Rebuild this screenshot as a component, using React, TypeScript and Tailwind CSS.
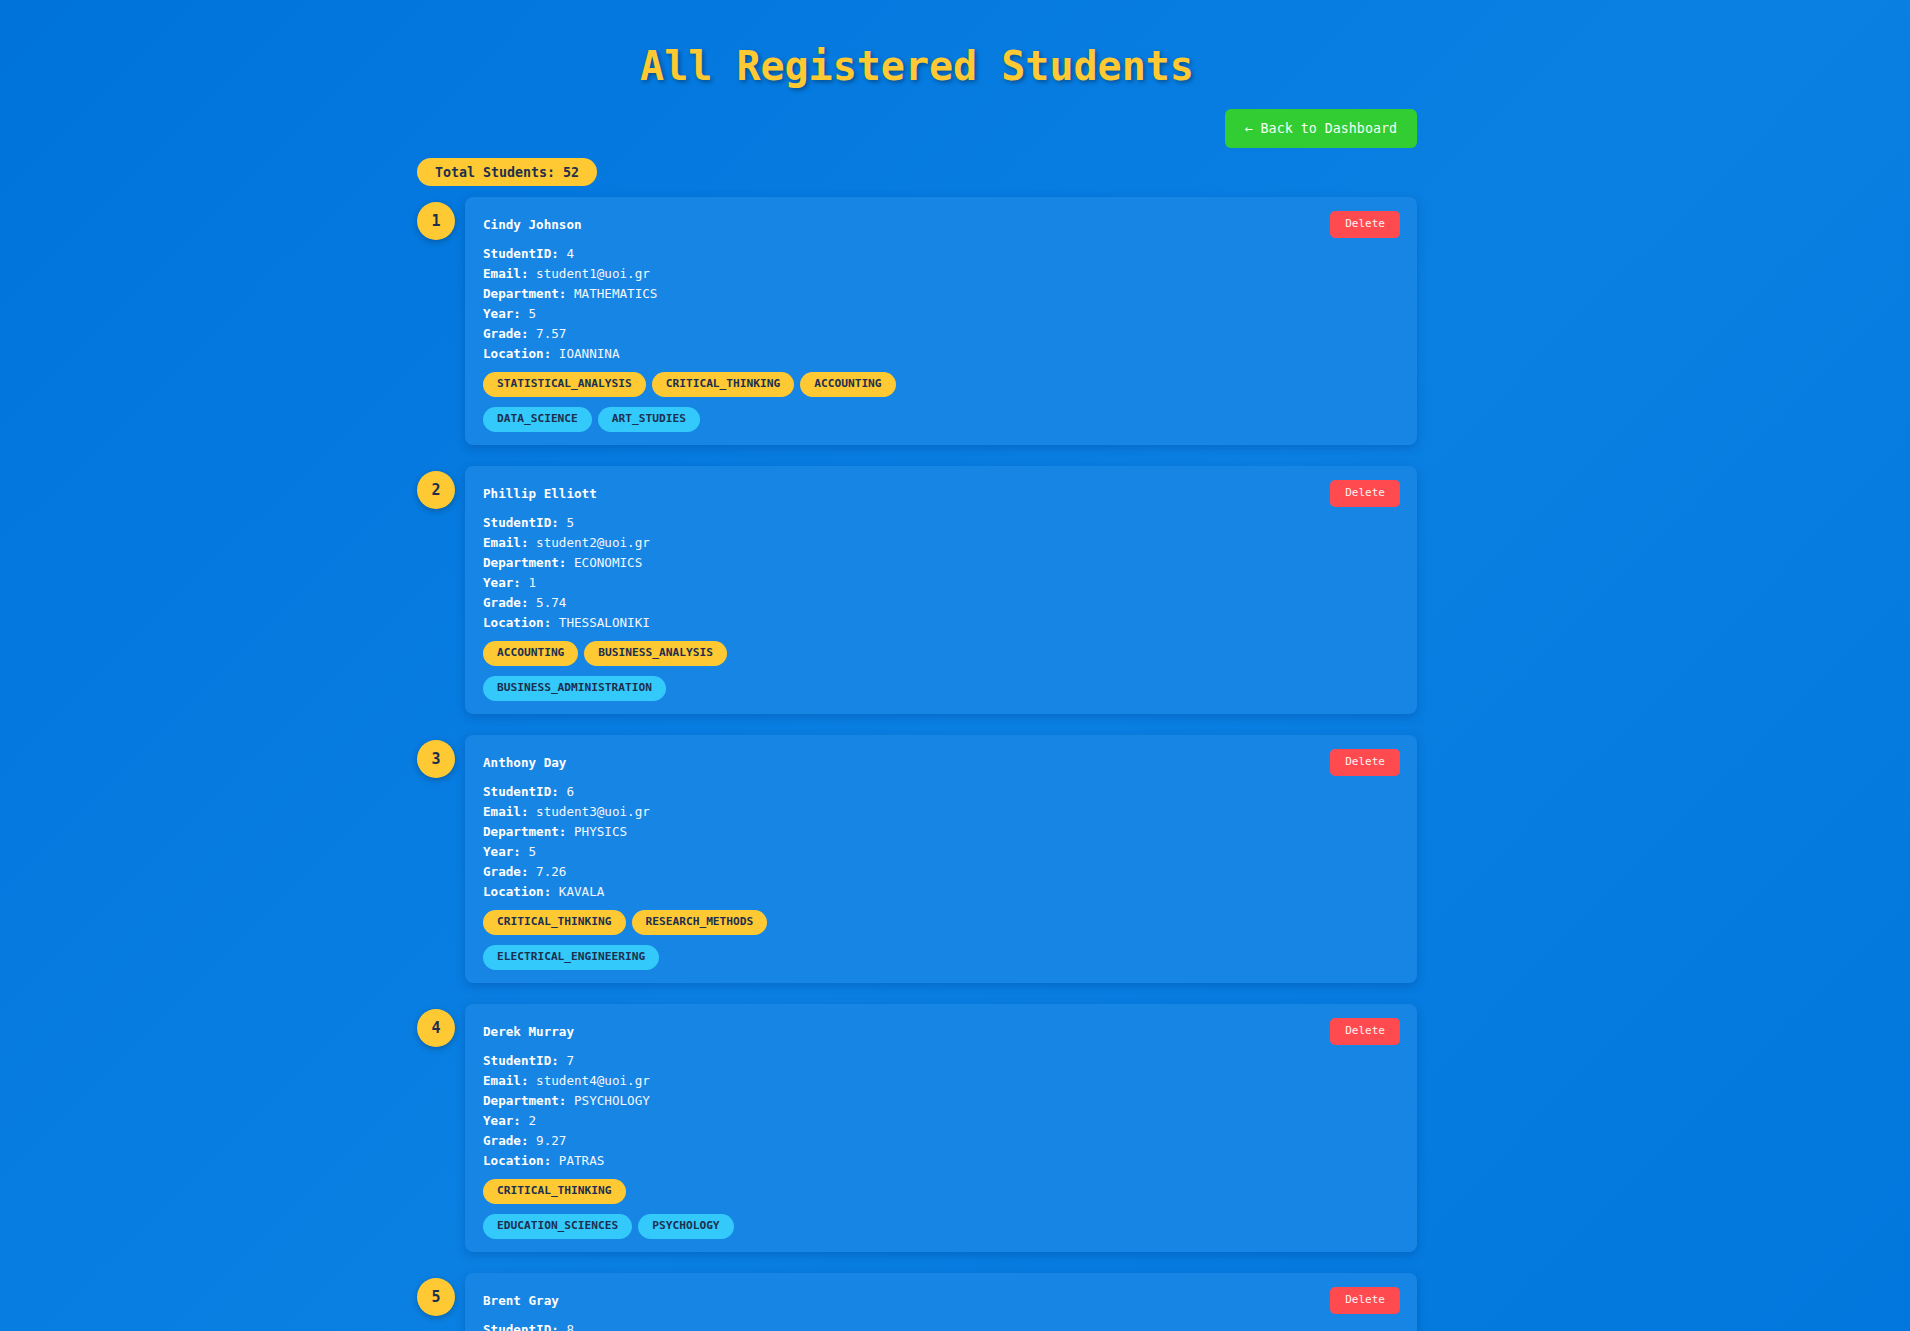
import React from "react";

type Student = {
  name: string;
  id: number;
  email: string;
  department: string;
  year: number;
  grade: string;
  location: string;
  skills: string[];
  interests: string[];
};

const students: Student[] = [
  {
    name: "Cindy Johnson",
    id: 4,
    email: "student1@uoi.gr",
    department: "MATHEMATICS",
    year: 5,
    grade: "7.57",
    location: "IOANNINA",
    skills: ["STATISTICAL_ANALYSIS", "CRITICAL_THINKING", "ACCOUNTING"],
    interests: ["DATA_SCIENCE", "ART_STUDIES"],
  },
  {
    name: "Phillip Elliott",
    id: 5,
    email: "student2@uoi.gr",
    department: "ECONOMICS",
    year: 1,
    grade: "5.74",
    location: "THESSALONIKI",
    skills: ["ACCOUNTING", "BUSINESS_ANALYSIS"],
    interests: ["BUSINESS_ADMINISTRATION"],
  },
  {
    name: "Anthony Day",
    id: 6,
    email: "student3@uoi.gr",
    department: "PHYSICS",
    year: 5,
    grade: "7.26",
    location: "KAVALA",
    skills: ["CRITICAL_THINKING", "RESEARCH_METHODS"],
    interests: ["ELECTRICAL_ENGINEERING"],
  },
  {
    name: "Derek Murray",
    id: 7,
    email: "student4@uoi.gr",
    department: "PSYCHOLOGY",
    year: 2,
    grade: "9.27",
    location: "PATRAS",
    skills: ["CRITICAL_THINKING"],
    interests: ["EDUCATION_SCIENCES", "PSYCHOLOGY"],
  },
  {
    name: "Brent Gray",
    id: 8,
    email: "student5@uoi.gr",
    department: "COMPUTER_SCIENCE",
    year: 3,
    grade: "8.12",
    location: "ATHENS",
    skills: ["PROGRAMMING", "CRITICAL_THINKING"],
    interests: ["SOFTWARE_ENGINEERING"],
  },
];

function Field({ label, value }: { label: string; value: React.ReactNode }) {
  return (
    <p className="h-[20px] leading-[20px] text-[#f3f7ff]">
      <span className="font-bold text-white">{label}:</span> {value}
    </p>
  );
}

function Tag({ text, blue }: { text: string; blue?: boolean }) {
  return (
    <span
      className={`h-[25px] px-[14px] flex items-center rounded-full text-[11.2px] font-bold text-[#1c2f4f] ${
        blue ? "bg-[#33c9fb]" : "bg-[#ffc933]"
      }`}
    >
      {text}
    </span>
  );
}

function StudentCard({ s, index }: { s: Student; index: number }) {
  return (
    <div className="flex items-start gap-[10px]">
      <div className="mt-[5px] w-[38px] h-[38px] shrink-0 rounded-full bg-[#ffc933] flex items-center justify-center text-[15px] font-bold text-[#1c2f4f] shadow-[0_2px_6px_rgba(0,0,0,0.25)]">
        {index}
      </div>
      <div className="flex-1 rounded-lg bg-[#1785e3] shadow-[0_3px_10px_rgba(0,40,110,0.25)] pt-[14px] pb-[13px] pl-[18px] pr-[17px]">
        <div className="flex items-center justify-between h-[27px] mb-[6px]">
          <h3 className="text-[12.6px] font-bold text-white pt-[2px]">{s.name}</h3>
          <button className="h-[27px] px-[15px] rounded-[5px] bg-[#ff4a50] text-[11px] text-[#fff2f2]">
            Delete
          </button>
        </div>
        <Field label="StudentID" value={s.id} />
        <Field label="Email" value={s.email} />
        <Field label="Department" value={s.department} />
        <Field label="Year" value={s.year} />
        <Field label="Grade" value={s.grade} />
        <Field label="Location" value={s.location} />
        <div className="mt-[8px] flex flex-wrap gap-[6px]">
          {s.skills.map((t) => (
            <Tag key={t} text={t} />
          ))}
        </div>
        <div className="mt-[10px] flex flex-wrap gap-[6px]">
          {s.interests.map((t) => (
            <Tag key={t} text={t} blue />
          ))}
        </div>
      </div>
    </div>
  );
}

export default function App() {
  return (
    <div
      className="min-h-screen bg-[linear-gradient(135deg,#0073db_0%,#0a80e3_50%,#0076dc_100%)] pr-[76px] pb-10 text-[12.6px]"
      style={{ fontFamily: '"DejaVu Sans Mono", "Liberation Mono", monospace' }}
    >
      <div className="max-w-[1000px] mx-auto pt-[46px]">
        <h1 className="text-center text-[40px] leading-[40px] font-bold text-[#ffc933] [text-shadow:2px_2px_4px_rgba(0,0,0,0.35)]">
          All Registered Students
        </h1>

        <div className="flex justify-end mt-[23px]">
          <button className="h-[39px] px-[20px] pt-[1px] rounded-md bg-[#32cd32] text-[13.33px] text-[#f4fff4]">
            ← Back to Dashboard
          </button>
        </div>

        <div className="mt-[10px]">
          <span className="inline-flex items-center h-[28px] pt-[1px] px-[18px] rounded-full bg-[#ffc933] text-[13.3px] font-bold text-[#1c2f4f]">
            Total Students: 52
          </span>
        </div>

        <div className="mt-[11px] flex flex-col gap-[21px]">
          {students.map((s, i) => (
            <StudentCard key={s.id} s={s} index={i + 1} />
          ))}
        </div>
      </div>
    </div>
  );
}
